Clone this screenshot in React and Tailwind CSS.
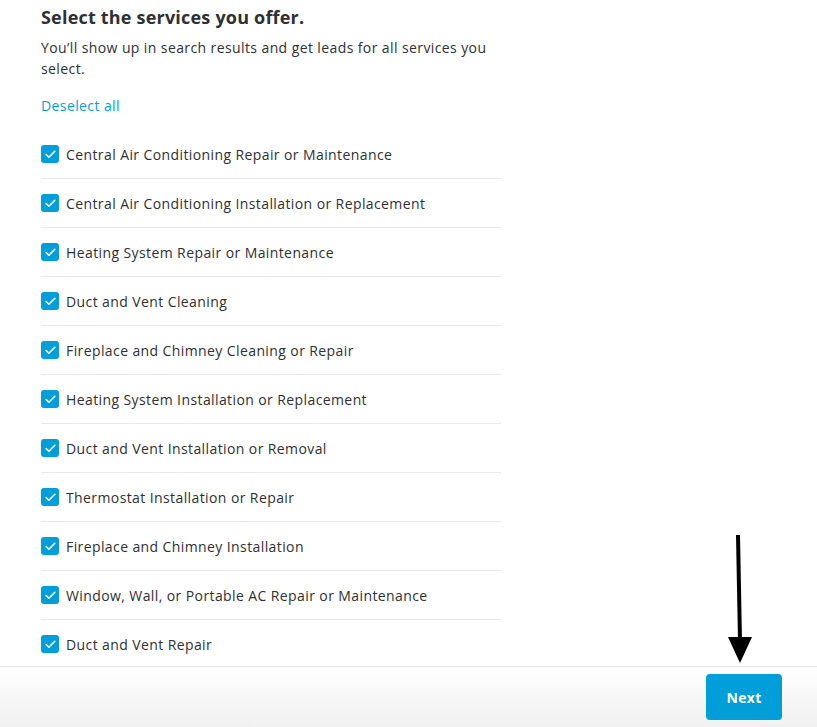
import { Check } from 'lucide-react';

const services = [
  'Central Air Conditioning Repair or Maintenance',
  'Central Air Conditioning Installation or Replacement',
  'Heating System Repair or Maintenance',
  'Duct and Vent Cleaning',
  'Fireplace and Chimney Cleaning or Repair',
  'Heating System Installation or Replacement',
  'Duct and Vent Installation or Removal',
  'Thermostat Installation or Repair',
  'Fireplace and Chimney Installation',
  'Window, Wall, or Portable AC Repair or Maintenance',
  'Duct and Vent Repair',
];

export default function App() {
  return (
    <div className="relative h-[727px] w-[817px] overflow-hidden bg-white text-[#2f3033]" style={{ fontFamily: '"Open Sans", Lato, sans-serif' }}>
      <div className="h-[666px] overflow-hidden pl-[41px]">
        <h1 className="pt-[5px] text-[18px] font-bold leading-[24px] tracking-[0.2px]">Select the services you offer.</h1>
        <p className="mt-[8px] w-[460px] text-[14px] leading-[21px] tracking-[0.4px]">
          You’ll show up in search results and get leads for all services you select.
        </p>
        <button type="button" className="mt-[17px] text-[14px] leading-[20px] tracking-[0.4px] text-[#009fd9]">Deselect all</button>
        <ul className="mt-[13px] w-[460px]">
          {services.map((s) => (
            <li key={s} className="flex h-[49px] items-center gap-[7px] border-b border-[#e9eaeb]">
              <span className="flex h-[18px] w-[18px] items-center justify-center rounded-[3px] bg-[#009fd9]">
                <Check size={13} strokeWidth={3} className="text-white" />
              </span>
              <span className="text-[14px] tracking-[0.4px]">{s}</span>
            </li>
          ))}
        </ul>
      </div>
      <div className="flex h-[61px] items-start justify-end border-t border-[#e3e4e5] bg-gradient-to-b from-white to-[#f0f0f0] pr-[35px] pt-[7px]">
        <button type="button" className="h-[46px] w-[76px] rounded-[4px] bg-[#009fd9] text-[14px] font-bold tracking-[0.3px] text-white">
          Next
        </button>
      </div>
      <svg className="absolute left-[725px] top-[533px]" width="30" height="132" viewBox="0 0 30 132">
        <line x1="13" y1="2" x2="15" y2="108" stroke="black" strokeWidth="4" />
        <polygon points="3,104 27,104 15,130" fill="black" />
      </svg>
    </div>
  );
}
